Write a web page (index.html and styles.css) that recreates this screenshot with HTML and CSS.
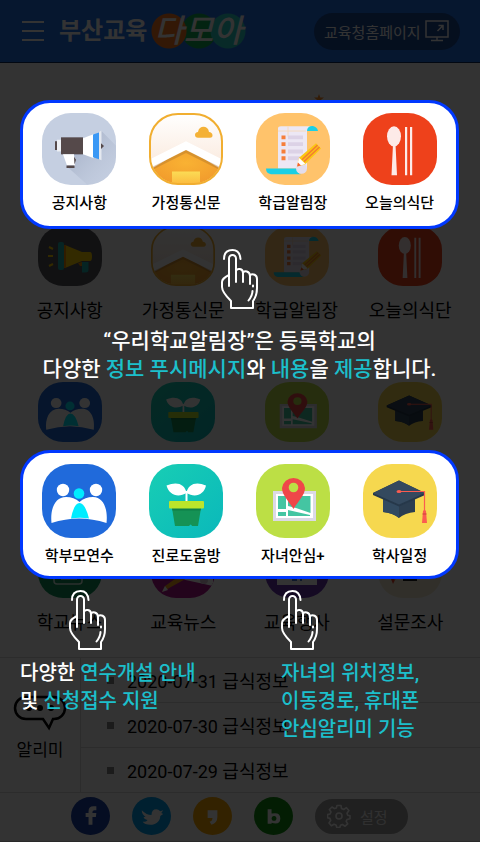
FILE: index.html
```html
<!DOCTYPE html>
<html lang="ko">
<head>
<meta charset="utf-8">
<meta name="viewport" content="width=device-width, initial-scale=1">
<title>부산교육 다모아</title>
<link rel="stylesheet" href="styles.css">
</head>
<body>
<svg class="sprite" aria-hidden="true">
  <defs>
    <clipPath id="tile"><rect width="74" height="74" rx="29"/></clipPath>
    <clipPath id="tile-in"><rect x="1.500" y="1.500" width="71" height="71" rx="28"/></clipPath>
    <linearGradient id="sky" x2="0" y2="1"><stop offset="0" stop-color="#fff"/><stop offset=".6" stop-color="#fbeee4"/></linearGradient>
    <radialGradient id="wall" cx=".5" cy=".4" r=".6"><stop offset="0" stop-color="#f9b233"/><stop offset="1" stop-color="#f19a2c"/></radialGradient>
    <linearGradient id="door" x2="0" y2="1"><stop offset="0" stop-color="#fbdc55"/><stop offset="1" stop-color="#fcb83d"/></linearGradient>
    <linearGradient id="mint" x2="1" y2="1"><stop offset="0" stop-color="#18ceb4"/><stop offset="1" stop-color="#0ab8bb"/></linearGradient>
    <linearGradient id="cast" x2="1" y2="1"><stop offset="0" stop-color="#8f9bb5" stop-opacity=".8"/><stop offset="1" stop-color="#c5cfe1" stop-opacity="0"/></linearGradient>
  </defs>
  <symbol id="notice" viewBox="0 0 74 74" preserveAspectRatio="none">
    <g clip-path="url(#tile)">
      <rect width="74" height="74" fill="#c5cfe1"/>
      <path d="M59 18 80 40V80H52L25 55 33 41 58 45Z" fill="url(#cast)"/>
    </g>
    <path d="M13 29h3v9h-3z" fill="#55494a"/>
    <path d="M15 27.500h5v12h-5z" fill="#eef0f4"/>
    <path d="M19 25h22v17.500H19z" fill="#55494a"/>
    <path d="M41 26 52 21.500V46.500L41 42.500Z" fill="#fff"/>
    <path d="M51 22 57 20V47.500L51 45.500Z" fill="#3a98f5"/>
    <path d="M57 19.500 59.500 18V48.500L57 47.500Z" fill="#e4e8ef"/>
    <path d="M59 31l3 3-3 3z" fill="#55494a"/>
    <path d="M21 42.500H32L33 54H25Z" fill="#fff"/>
    <path d="M24.500 54h8v2.500h-8zM32 45l2 3-1.500 5z" fill="#55494a"/>
  </symbol>
  <symbol id="letter" viewBox="0 0 74 74" preserveAspectRatio="none">
    <g clip-path="url(#tile-in)">
      <rect width="74" height="74" fill="url(#sky)"/>
      <path d="M0 59 37 36 74 59V74H0Z" fill="url(#wall)"/>
      <path d="M0 51 37 33 74 51V60L37 41 0 60Z" fill="#8a5a28" opacity=".28"/>
      <path d="M0 48 37 29 74 48V57L37 38 0 57Z" fill="#fff"/>
      <path d="M23 60h28v14H23z" fill="url(#door)"/>
    </g>
    <path d="M49 25.500c-4 0-4-6 0-6 1-7 10-7 11 0 4 0 5 6 1 6z" fill="#f4b136"/>
    <rect x="1" y="1" width="72" height="72" rx="28" fill="none" stroke="#f1ae30" stroke-width="2"/>
  </symbol>
  <symbol id="classnote" viewBox="0 0 74 74" preserveAspectRatio="none">
    <rect width="74" height="74" rx="29" fill="#ffc36b"/>
    <path d="M50 18.500c0-7 11-7 12 0z" fill="#1bcfe5"/>
    <path d="M22 57V16q0-2.500 3-2.500H56q-5 0-5 5V57z" fill="#ece7f4"/>
    <path d="M22 18.500H50M32 14V24" stroke="#f7d9bd"/>
    <path d="M10 57H41q0 5 4 6H15q-5-1-5-6z" fill="#1bcfe5"/>
    <circle cx="45.500" cy="57" r="5.500" fill="#e3ddec"/>
    <path d="M25.500 23h4v4h-4zM25.500 30h4v4h-4zM25.500 37.500h4v4h-4zM25.500 44.500h4v4h-4z" fill="#f67e3a"/>
    <path d="M32 23h15v4H32zM32 30h15v4H32zM32 37.500h15v4H32zM32 44.500h12v4H32z" fill="#dcd2e6"/>
    <path d="M41 55 43 46 60 31 65 36.500 49 53Z" fill="#fbc614"/>
    <path d="M46 48 61.500 33M48 50 63.500 35" stroke="#f47d31" stroke-width="1.500"/>
    <path d="M41 55 43 46 49.500 52.500Z" fill="#fff"/>
    <path d="M41 55 42 51 45 54Z" fill="#f4622e"/>
  </symbol>
  <symbol id="meal" viewBox="0 0 74 74" preserveAspectRatio="none">
    <rect width="74" height="74" rx="29" fill="#ee411b"/>
    <ellipse cx="31" cy="24" rx="7" ry="10.500" fill="#fdeae8"/>
    <path d="M30 32h2.500l1.500 32h-5.500zM42 14.500h2.200V64H42zM47 14.500h2.200V64H47z" fill="#fdeae8"/>
  </symbol>
  <symbol id="parents" viewBox="0 0 74 74" preserveAspectRatio="none">
    <rect width="74" height="74" rx="29" fill="#206adb"/>
    <circle cx="21" cy="26" r="6.200" fill="#fff"/><circle cx="54" cy="26" r="6.200" fill="#fff"/>
    <path d="M9.500 59C8 45 13 33 24 33q8 0 13.500 5Q43 33 51 33c11 0 15 13 13.500 26Q37 50 9.500 59Z" fill="#fff"/>
    <circle cx="37" cy="29.500" r="5.300" fill="#00ecff"/>
    <path d="M29 54.500Q32 39 37.500 39T47 54.500Q38 53 29 54.500Z" fill="#00ecff"/>
  </symbol>
  <symbol id="career" viewBox="0 0 74 74" preserveAspectRatio="none">
    <rect width="74" height="74" rx="29" fill="url(#mint)"/>
    <path d="M17.500 21.500C28 17 36 20 37.500 29 39 20 47 17 57 21.500 55 31 46 34 37.500 29 29 34 20 31 17.500 21.500Z" fill="#fff"/>
    <path d="M36.500 27h2V37h-2z" fill="#fff"/>
    <path d="M23 44H52L49 62H43q-1-3-3 0H26Z" fill="#159255"/>
    <path d="M23 44H52L51.500 46.500H23.500Z" fill="#0f7f49"/>
    <rect x="20" y="37" width="35" height="7.500" rx="1" fill="#bce52b"/>
  </symbol>
  <symbol id="safe" viewBox="0 0 74 74" preserveAspectRatio="none">
    <rect width="74" height="74" rx="29" fill="#bcdf45"/>
    <path d="M17 27h43v30H17z" fill="#dbd9e5"/>
    <path d="M20 30h37v24H20z" fill="#fff"/>
    <path d="M22 32h8v13h-8zM22 48h8v4h-8zM32 32h22.500v17L40 44 32 42zM32 46l22 5v1H32z" fill="#44c5a2"/>
    <path d="M37.500 45C32 36 26 31 26 24a11.600 11.600 0 0 1 23 0C49 31 43 36 37.500 45Z" fill="#ef4749"/>
    <circle cx="37.500" cy="23.500" r="4.800" fill="#bcdf45"/>
  </symbol>
  <symbol id="schedule" viewBox="0 0 74 74" preserveAspectRatio="none">
    <rect width="74" height="74" rx="29" fill="#f6d84f"/>
    <path d="M20 33V48Q30 49 36 54 42 49 52 48V33Z" fill="#2c3e50"/>
    <path d="M20 33V48Q30 49 36 54V40Z" fill="#324a60"/>
    <path d="M10 29 36 16.500 62 29V31L36 42.500 10 31Z" fill="#26384a"/>
    <path d="M10 29 36 16.500 62 29 36 40.500Z" fill="#34495e"/>
    <path d="M36 27.500H61.500V47" fill="none" stroke="#fb5c50" stroke-width="1.200"/>
    <ellipse cx="36" cy="27.500" rx="2.500" ry="1.500" fill="#fb5c50"/>
    <path d="M60 47q1.500-2 3 0l1 12h-5z" fill="#fb5c50"/>
    <path d="M59.500 50h4" stroke="#c9433c"/>
  </symbol>
  <symbol id="speaker" viewBox="0 0 64 60" preserveAspectRatio="none">
    <rect width="64" height="60" rx="25" fill="#55555d"/>
    <path d="M27 19 44 26H52q2 0 2 4.500T52 35H44L27 42Z" fill="#ffd200"/>
    <path d="M26 19h2v23H26z" fill="#f08a00"/>
    <rect x="20" y="16" width="6" height="28" rx="2" fill="#1fb3b0"/>
    <path d="M40 37l4-1v4h-2z" fill="#f08a00"/>
    <path d="M44 36h6.500v8q0 2.500-3.500 2.500h-3z" fill="#1fb3b0"/>
    <path d="M11 21l4 2M10 30h5M11 40l4-2" stroke="#ffd200" stroke-width="2"/>
  </symbol>
  <symbol id="schoolnews" viewBox="0 0 64 60" preserveAspectRatio="none">
    <rect width="64" height="60" rx="25" fill="#12935a"/>
    <path d="M16 30V43q0 3 3 3H41q3 0 3-3V30M23 36h16M23 41h16" fill="none" stroke="#d8efe4" stroke-width="1.500"/>
  </symbol>
  <symbol id="edunews" viewBox="0 0 64 60" preserveAspectRatio="none">
    <clipPath id="news-clip"><rect width="64" height="60" rx="25"/></clipPath>
    <g clip-path="url(#news-clip)">
      <rect width="64" height="60" fill="#b0148e"/>
      <path d="M20 30H62V48L30 41Z" fill="#fff"/>
      <path d="M11 54 14 48 34 34 38 39Z" fill="#f4a01c"/>
      <path d="M11 54 14 48 17 52Z" fill="#fff"/>
      <circle cx="53" cy="42" r="4" fill="#d9c4d8"/>
    </g>
  </symbol>
  <symbol id="event" viewBox="0 0 64 60" preserveAspectRatio="none">
    <rect width="64" height="60" rx="25" fill="#6c35b0"/>
    <path d="M12 18H52V47H12z" fill="#fff"/>
    <path d="M27 40h5v3h-5zM35 36h2v7h-2z" fill="#4a7fd0"/>
  </symbol>
  <symbol id="survey" viewBox="0 0 64 60" preserveAspectRatio="none">
    <rect width="64" height="60" rx="25" fill="#f3ecd2"/>
    <path d="M11 36H20L15 46Z" fill="#e8402b"/><path d="M16 36h4l-4 7z" fill="#f6b42b"/>
    <path d="M25 38H39V43H25z" fill="#222"/>
  </symbol>
  <symbol id="hand" viewBox="0 0 37 60">
    <g fill="none" stroke="#fff" stroke-width="2" stroke-linecap="round" stroke-linejoin="round">
      <path d="M3 10C3 4 6.500 1 11.500 1S19 4 19.500 10"/>
      <path d="M8 37V9.500a3.500 3.500 0 0 1 7 0V33"/>
      <path d="M15 22c1-3 7-3 7 2v9M22 24c1-3 7-2 7 3v8M29 26c3-2 7 0 7 4v9c0 5-1 9-4 13v7H10v-7C5 47 1 42 1 38v-5c0-3 3-5 7-7"/>
      <path d="M31.500 42c0 4-2 7-4 9.500M32 36.500v1"/>
    </g>
  </symbol>
</svg>

<div class="screen">
  <div class="app">
    <header class="topbar">
      <button class="menu" type="button" aria-label="메뉴"><span></span><span></span><span></span></button>
      <a class="brand" href="#">
        <span class="brand-name">부산교육</span>
        <span class="brand-mark">다모아</span>
      </a>
      <a class="home-link" href="#">교육청홈페이지
        <svg width="24" height="22" viewBox="0 0 24 22" fill="none" stroke="#fff" stroke-width="1.500" aria-hidden="true"><path d="M1 1H23V17H1zM12 17v3.500M6 20.500H18M12.500 11 18 5.500M13.500 5.500H18V10"/></svg>
      </a>
    </header>

    <main>
      <div class="hero"><svg width="10" height="10" viewBox="0 0 10 10" aria-hidden="true"><path d="M5 0 6.300 3.500H10L7.100 5.800 8.200 10 5 7.500 1.800 10 2.900 5.800 0 3.500H3.700Z" fill="#ff8a24"/></svg></div>
      <nav class="services">
        <a href="#"><svg><use href="#speaker"/></svg>공지사항</a>
        <a href="#"><svg><use href="#letter"/></svg>가정통신문</a>
        <a href="#"><svg><use href="#classnote"/></svg>학급알림장</a>
        <a href="#"><svg><use href="#meal"/></svg>오늘의식단</a>
        <a href="#"><svg><use href="#parents"/></svg>학부모연수</a>
        <a href="#"><svg><use href="#career"/></svg>진로도움방</a>
        <a href="#"><svg><use href="#safe"/></svg>자녀안심+</a>
        <a href="#"><svg><use href="#schedule"/></svg>학사일정</a>
        <a href="#"><svg><use href="#schoolnews"/></svg>학교뉴스</a>
        <a href="#"><svg><use href="#edunews"/></svg>교육뉴스</a>
        <a href="#"><svg><use href="#event"/></svg>교육행사</a>
        <a href="#"><svg><use href="#survey"/></svg>설문조사</a>
      </nav>

      <section class="alerts">
        <h2 class="alerts-title">
          <svg width="54" height="36" viewBox="0 0 54 36" aria-hidden="true"><path d="M13 2H41a11 11 0 0 1 0 22H40L36 33 30 24H13A11 11 0 0 1 13 2Z" fill="none" stroke="#000" stroke-width="2.500"/><circle cx="16" cy="13" r="3"/><circle cx="27" cy="13" r="3"/><circle cx="38" cy="13" r="3"/></svg>
          알리미
        </h2>
        <ul class="alerts-list">
          <li><a href="#">2020-07-31 급식정보</a></li>
          <li><a href="#">2020-07-30 급식정보</a></li>
          <li><a href="#">2020-07-29 급식정보</a></li>
        </ul>
      </section>
    </main>

    <footer class="bottombar">
      <a class="social facebook" href="#" aria-label="페이스북"><svg viewBox="0 0 40 38"><path d="M18 28V20H15V16H18V14q0-5 5-5h3v4H24q-2 0-2 2v1h4l-.500 4H22v8z"/></svg></a>
      <a class="social twitter" href="#" aria-label="트위터"><svg viewBox="0 0 40 38"><path d="M10 13q5 5 10 5 0-6 5-6 2 0 4 2l3-1-2 3 2 1-3 2c0 6-5 9-10 9-4 0-7-1-8-3q4 0 5-2-4-1-4-3h2q-4-3-4-7z"/></svg></a>
      <a class="social story" href="#" aria-label="카카오스토리"><svg viewBox="0 0 40 38"><path d="M15 13H25V20q0 6-6 8l-2-3q3-1 3-4H15z"/></svg></a>
      <a class="social blog" href="#" aria-label="블로그"><svg viewBox="0 0 40 38"><path fill-rule="evenodd" d="M14 12h4v4.500q9-2 9 5T18 26v1h-4zM20.500 19a2.500 2.500 0 1 0 .1 0z"/></svg></a>
      <button class="settings" type="button">
        <svg width="24" height="24" viewBox="0 0 24 24" fill="none" stroke="#fff" stroke-width="1.600" stroke-linejoin="round" aria-hidden="true"><circle cx="12" cy="12" r="3"/><path d="M10 1.500h4l.500 3 2.200 1 2.700-1.800 2.500 2.800L20 9.300l.700 1.900 2.300.5v3l-3 .8-.8 1.800 1.500 2.600-2.600 2.300-2.700-1.700-1.900.8-.7 2.200h-3l-.8-2.500-2-.8-2.600 1.500L2 19l1.700-2.600-.8-2-2.400-.6v-3.200l2.600-.6.9-2L2.400 5.500 5 3l2.500 1.600 1.900-.7z"/></svg>
        설정
      </button>
    </footer>
  </div>

  <div class="guide">
    <div class="panel">
      <a href="#"><svg><use href="#notice"/></svg>공지사항</a>
      <a href="#"><svg><use href="#letter"/></svg>가정통신문</a>
      <a href="#"><svg><use href="#classnote"/></svg>학급알림장</a>
      <a href="#"><svg><use href="#meal"/></svg>오늘의식단</a>
    </div>
    <div class="tip tip-main">
      <svg class="hand" aria-hidden="true"><use href="#hand"/></svg>
      <p>“우리학교알림장”은 등록학교의<br>다양한 <em>정보 푸시메시지</em>와 <em>내용</em>을 <em>제공</em>합니다.</p>
    </div>
    <div class="panel panel-low">
      <a href="#"><svg><use href="#parents"/></svg>학부모연수</a>
      <a href="#"><svg><use href="#career"/></svg>진로도움방</a>
      <a href="#"><svg><use href="#safe"/></svg>자녀안심+</a>
      <a href="#"><svg><use href="#schedule"/></svg>학사일정</a>
    </div>
    <div class="tips">
      <div class="tip tip-parents">
        <svg class="hand" aria-hidden="true"><use href="#hand"/></svg>
        <p>다양한 <em>연수개설 안내</em><br>및 <em>신청접수 지원</em></p>
      </div>
      <div class="tip">
        <svg class="hand" aria-hidden="true"><use href="#hand"/></svg>
        <p><em>자녀의 위치정보,<br>이동경로, 휴대폰<br>안심알리미 기능</em></p>
      </div>
    </div>
  </div>
</div>
</body>
</html>
```
FILE: styles.css
```css
* { box-sizing: border-box; }

body {
  margin: 0;
  background: #fff;
  color: #000;
  font-family: Roboto, "Noto Sans CJK KR", sans-serif;
  font-size: 18px;
}

a { color: inherit; text-decoration: none; }
button { border: 0; padding: 0; font: inherit; cursor: pointer; }
svg { display: block; flex: none; }
.sprite { position: absolute; width: 0; height: 0; }

.screen { position: relative; min-height: 100vh; overflow: hidden; }
.app { display: flex; flex-direction: column; min-height: 100vh; }

/* Header */
.topbar {
  display: flex;
  align-items: center;
  height: 63px;
  padding: 0 20px 0 22px;
  background: #2272ea;
  border-bottom: 1px solid #0c2a5a;
  color: #fff;
}
.menu {
  display: grid;
  gap: 7px;
  width: 22px;
  background: none;
}
.menu span { height: 2px; background: #fff; }
.brand { display: flex; align-items: center; margin-left: 15px; }
.brand-name { font-size: 24px; font-weight: 700; line-height: 36px; }
.brand-mark {
  margin-left: 4px;
  padding: 0 3px;
  background:
    radial-gradient(circle at 18px 50%, #ff7a20 17px, transparent 18px),
    radial-gradient(circle at 77px 50%, #28d0c8 17px, transparent 18px),
    radial-gradient(circle at 48px 50%, #10b058 17px, transparent 18px);
  font-size: 32px;
  font-style: italic;
  font-weight: 500;
  line-height: 36px;
}
.home-link {
  display: flex;
  align-items: center;
  justify-content: space-between;
  width: 146px;
  height: 37px;
  margin-left: auto;
  padding: 0 11px 0 10px;
  border-radius: 19px;
  background: #1a4a98;
  font-size: 15px;
  white-space: nowrap;
}

/* Service grid */
.hero { display: flex; justify-content: center; height: 163px; padding: 31px 0 0 158px; }
.services {
  display: grid;
  grid-template-columns: repeat(4, 1fr);
  row-gap: 58px;
  padding: 0 13px;
}
.services a {
  display: flex;
  flex-direction: column;
  align-items: center;
  gap: 11px;
  line-height: 27px;
  white-space: nowrap;
}
.services svg { width: 64px; height: 60px; }

/* Alerts */
.alerts {
  display: flex;
  margin-top: 21px;
  border-top: 1px solid #ddd;
  border-bottom: 1px solid #ddd;
}
.alerts-title {
  display: flex;
  flex-direction: column;
  align-items: center;
  justify-content: center;
  gap: 7px;
  width: 80px;
  margin: 0;
  padding-top: 6px;
  font-size: 17px;
  font-weight: 400;
  line-height: 24px;
}
.alerts-list {
  flex: 1;
  margin: 0;
  padding: 0;
  border-left: 1px solid #ddd;
  list-style: none;
}
.alerts-list li + li { border-top: 1px solid #ddd; }
.alerts-list a {
  display: flex;
  align-items: center;
  gap: 13px;
  height: 44px;
  padding-left: 26px;
}
.alerts-list a::before { content: ""; width: 7px; height: 7px; background: #888; }

/* Footer */
.bottombar {
  display: flex;
  align-items: center;
  gap: 22px;
  padding: 4px 71px 6px;
  border-bottom: 1px solid #ccc;
}
.social { flex: none; width: 39px; height: 38px; border-radius: 50%; }
.social svg { width: 39px; height: 38px; fill: #fff; }
.facebook { background: #1a40a8; }
.twitter { background: #00a0f0; }
.story { background: #ffa800; }
.blog { background: #109010; }
.settings {
  display: flex;
  align-items: center;
  gap: 9px;
  flex: none;
  width: 93px;
  height: 35px;
  padding-left: 12px;
  border-radius: 18px;
  background: #a0a0a0;
  color: #f0f0f0;
  font-size: 15px;
}

/* Guide layer over the dimmed app */
.guide {
  position: absolute;
  inset: 0;
  padding: 100px 21px 0 20px;
  background: rgba(0, 0, 0, 0.8);
  color: #fff;
}
.panel {
  display: grid;
  grid-template-columns: repeat(4, 1fr);
  padding: 10px 3px 11px;
  border: 3px solid #0038ff;
  border-radius: 30px;
  background: #fff;
  color: #000;
  font-size: 15px;
  font-weight: 500;
  line-height: 24px;
}
.panel a {
  display: flex;
  flex-direction: column;
  align-items: center;
  gap: 6px;
  white-space: nowrap;
}
.panel svg { width: 74px; height: 72px; }
.panel-low { margin-top: 67px; padding: 11px 3px 8px; }
.panel-low svg { height: 74px; }

.hand { width: 37px; height: 60px; }
.tip p { margin: 9px 0 0; font-size: 20px; font-weight: 500; line-height: 28px; white-space: nowrap; }
.tip em { color: #1cbfcb; font-style: normal; }
.tip-main { margin-top: 20px; text-align: center; }
.tip-main .hand { margin: 0 auto; }
.tip-main p { margin-top: 18px; font-size: 21px; }
.tips { display: grid; grid-template-columns: 261px 1fr; margin-top: 11px; }
.tip-parents .hand { margin-left: 49px; }
```
